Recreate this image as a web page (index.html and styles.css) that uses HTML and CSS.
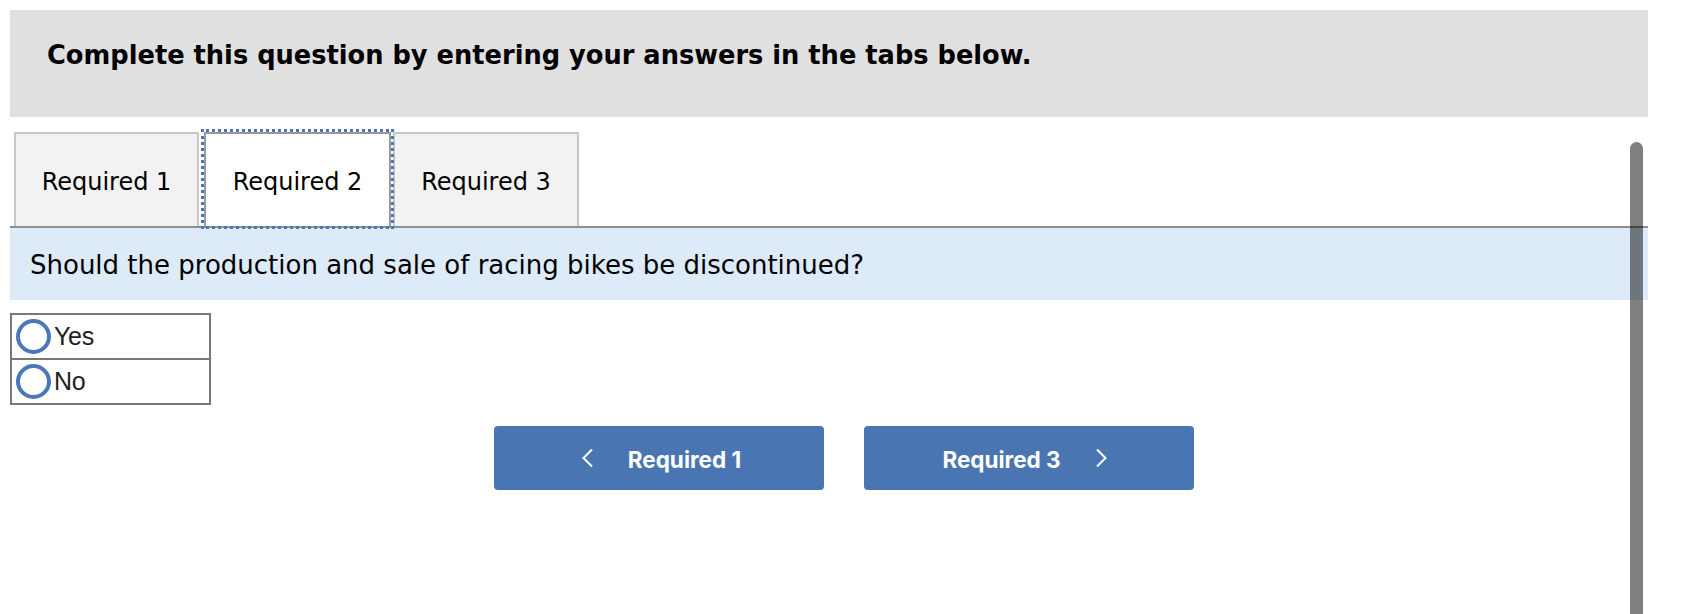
FILE: index.html
```html
<!DOCTYPE html>
<html lang="en">
<head>
<meta charset="utf-8">
<title>Required 2</title>
<link rel="stylesheet" href="styles.css">
</head>
<body>
<div class="page">
  <div class="header">
    <h1 class="header-title">Complete this question by entering your answers in the tabs below.</h1>
  </div>
  <div class="tabs">
    <div class="tab">Required 1</div>
    <div class="tab tab-active">Required 2</div>
    <div class="tab tab-last">Required 3</div>
  </div>
  <div class="question">Should the production and sale of racing bikes be discontinued?</div>
  <div class="choices">
    <div class="choice"><span class="radio"></span><span class="choice-label">Yes</span></div>
    <div class="choice"><span class="radio"></span><span class="choice-label">No</span></div>
  </div>
  <div class="nav">
    <button class="nav-btn nav-prev">
      <svg class="chev" width="13" height="20" viewBox="0 0 13 20"><polyline points="11,1.5 2.5,10 11,18.5" fill="none" stroke="#fff" stroke-width="2"/></svg>
      <span class="nav-text">Required 1</span>
    </button>
    <button class="nav-btn nav-next">
      <span class="nav-text">Required 3</span>
      <svg class="chev" width="13" height="20" viewBox="0 0 13 20"><polyline points="2,1.5 10.5,10 2,18.5" fill="none" stroke="#fff" stroke-width="2"/></svg>
    </button>
  </div>
</div>
<div class="scrollbar"></div>
</body>
</html>
```
FILE: styles.css
```css
html, body {
  margin: 0;
  padding: 0;
  background: #ffffff;
  overflow: hidden;
}
body {
  width: 1706px;
  height: 614px;
  position: relative;
}
.page {
  padding: 10px 58px 0 10px;
}
.header {
  height: 107px;
  box-sizing: border-box;
  background: #e0e0e0;
  padding: 30px 0 0 37px;
}
.header-title {
  margin: 0;
  font-family: "DejaVu Sans", Verdana, sans-serif;
  font-weight: bold;
  font-size: 25.7px;
  line-height: 30px;
  color: #000;
}
.tabs {
  margin-top: 15px;
  padding-left: 4px;
  display: flex;
  border-bottom: 2px solid #8f8f8f;
}
.tab {
  width: 185px;
  height: 94px;
  box-sizing: border-box;
  border: 2px solid #c6c6c6;
  border-bottom: none;
  background: #f2f2f2;
  display: flex;
  align-items: center;
  justify-content: center;
  padding-top: 4px;
  font-family: "DejaVu Sans", Verdana, sans-serif;
  font-size: 24px;
  line-height: 28px;
  color: #000;
}
.tab-active {
  width: 187px;
  margin-left: 5px;
  background: #ffffff;
  border-color: #9a9a9a;
  outline: 3px dotted #4a77b9;
  position: relative;
  z-index: 1;
}
.tab-last {
  width: 186px;
  margin-left: 2px;
}
.question {
  height: 72px;
  box-sizing: border-box;
  background: #ddeaf7;
  padding: 2px 0 0 20px;
  display: flex;
  align-items: center;
  font-family: "DejaVu Sans", Verdana, sans-serif;
  font-size: 26px;
  line-height: 30px;
  color: #000;
}
.choices {
  margin-top: 13px;
  width: 201px;
  box-sizing: border-box;
  border: 2px solid #787878;
}
.choice {
  height: 43px;
  display: flex;
  align-items: center;
  padding-left: 4px;
}
.choice + .choice {
  border-top: 2px solid #787878;
}
.radio {
  width: 35px;
  height: 35px;
  box-sizing: border-box;
  border: 4px solid #4a77b9;
  border-radius: 50%;
  flex: none;
}
.choice-label {
  margin-left: 3px;
  font-family: "Liberation Sans", Arial, sans-serif;
  font-size: 25px;
  color: #1e1e1e;
  letter-spacing: -0.3px;
}
.nav {
  margin-top: 21px;
  padding-left: 30px;
  display: flex;
  justify-content: center;
  gap: 40px;
}
.nav-btn {
  width: 330px;
  height: 64px;
  border: none;
  border-radius: 4px;
  background: #4a75b3;
  color: #fff;
  display: flex;
  align-items: center;
  justify-content: center;
  gap: 34px;
  padding: 0;
  font-family: Inter, "Liberation Sans", sans-serif;
  font-weight: 700;
  font-size: 22.5px;
}
.nav-prev {
  padding-left: 4px;
}
.nav-next {
  padding-right: 8px;
}
.chev {
  display: block;
  flex: none;
}
.nav-text {
  display: block;
  line-height: 26px;
  padding-top: 3px;
}
.scrollbar {
  position: absolute;
  left: 1630px;
  top: 142px;
  width: 13px;
  height: 480px;
  border-radius: 7px 7px 0 0;
  background: rgba(0, 0, 0, 0.5);
  z-index: 5;
}
```
